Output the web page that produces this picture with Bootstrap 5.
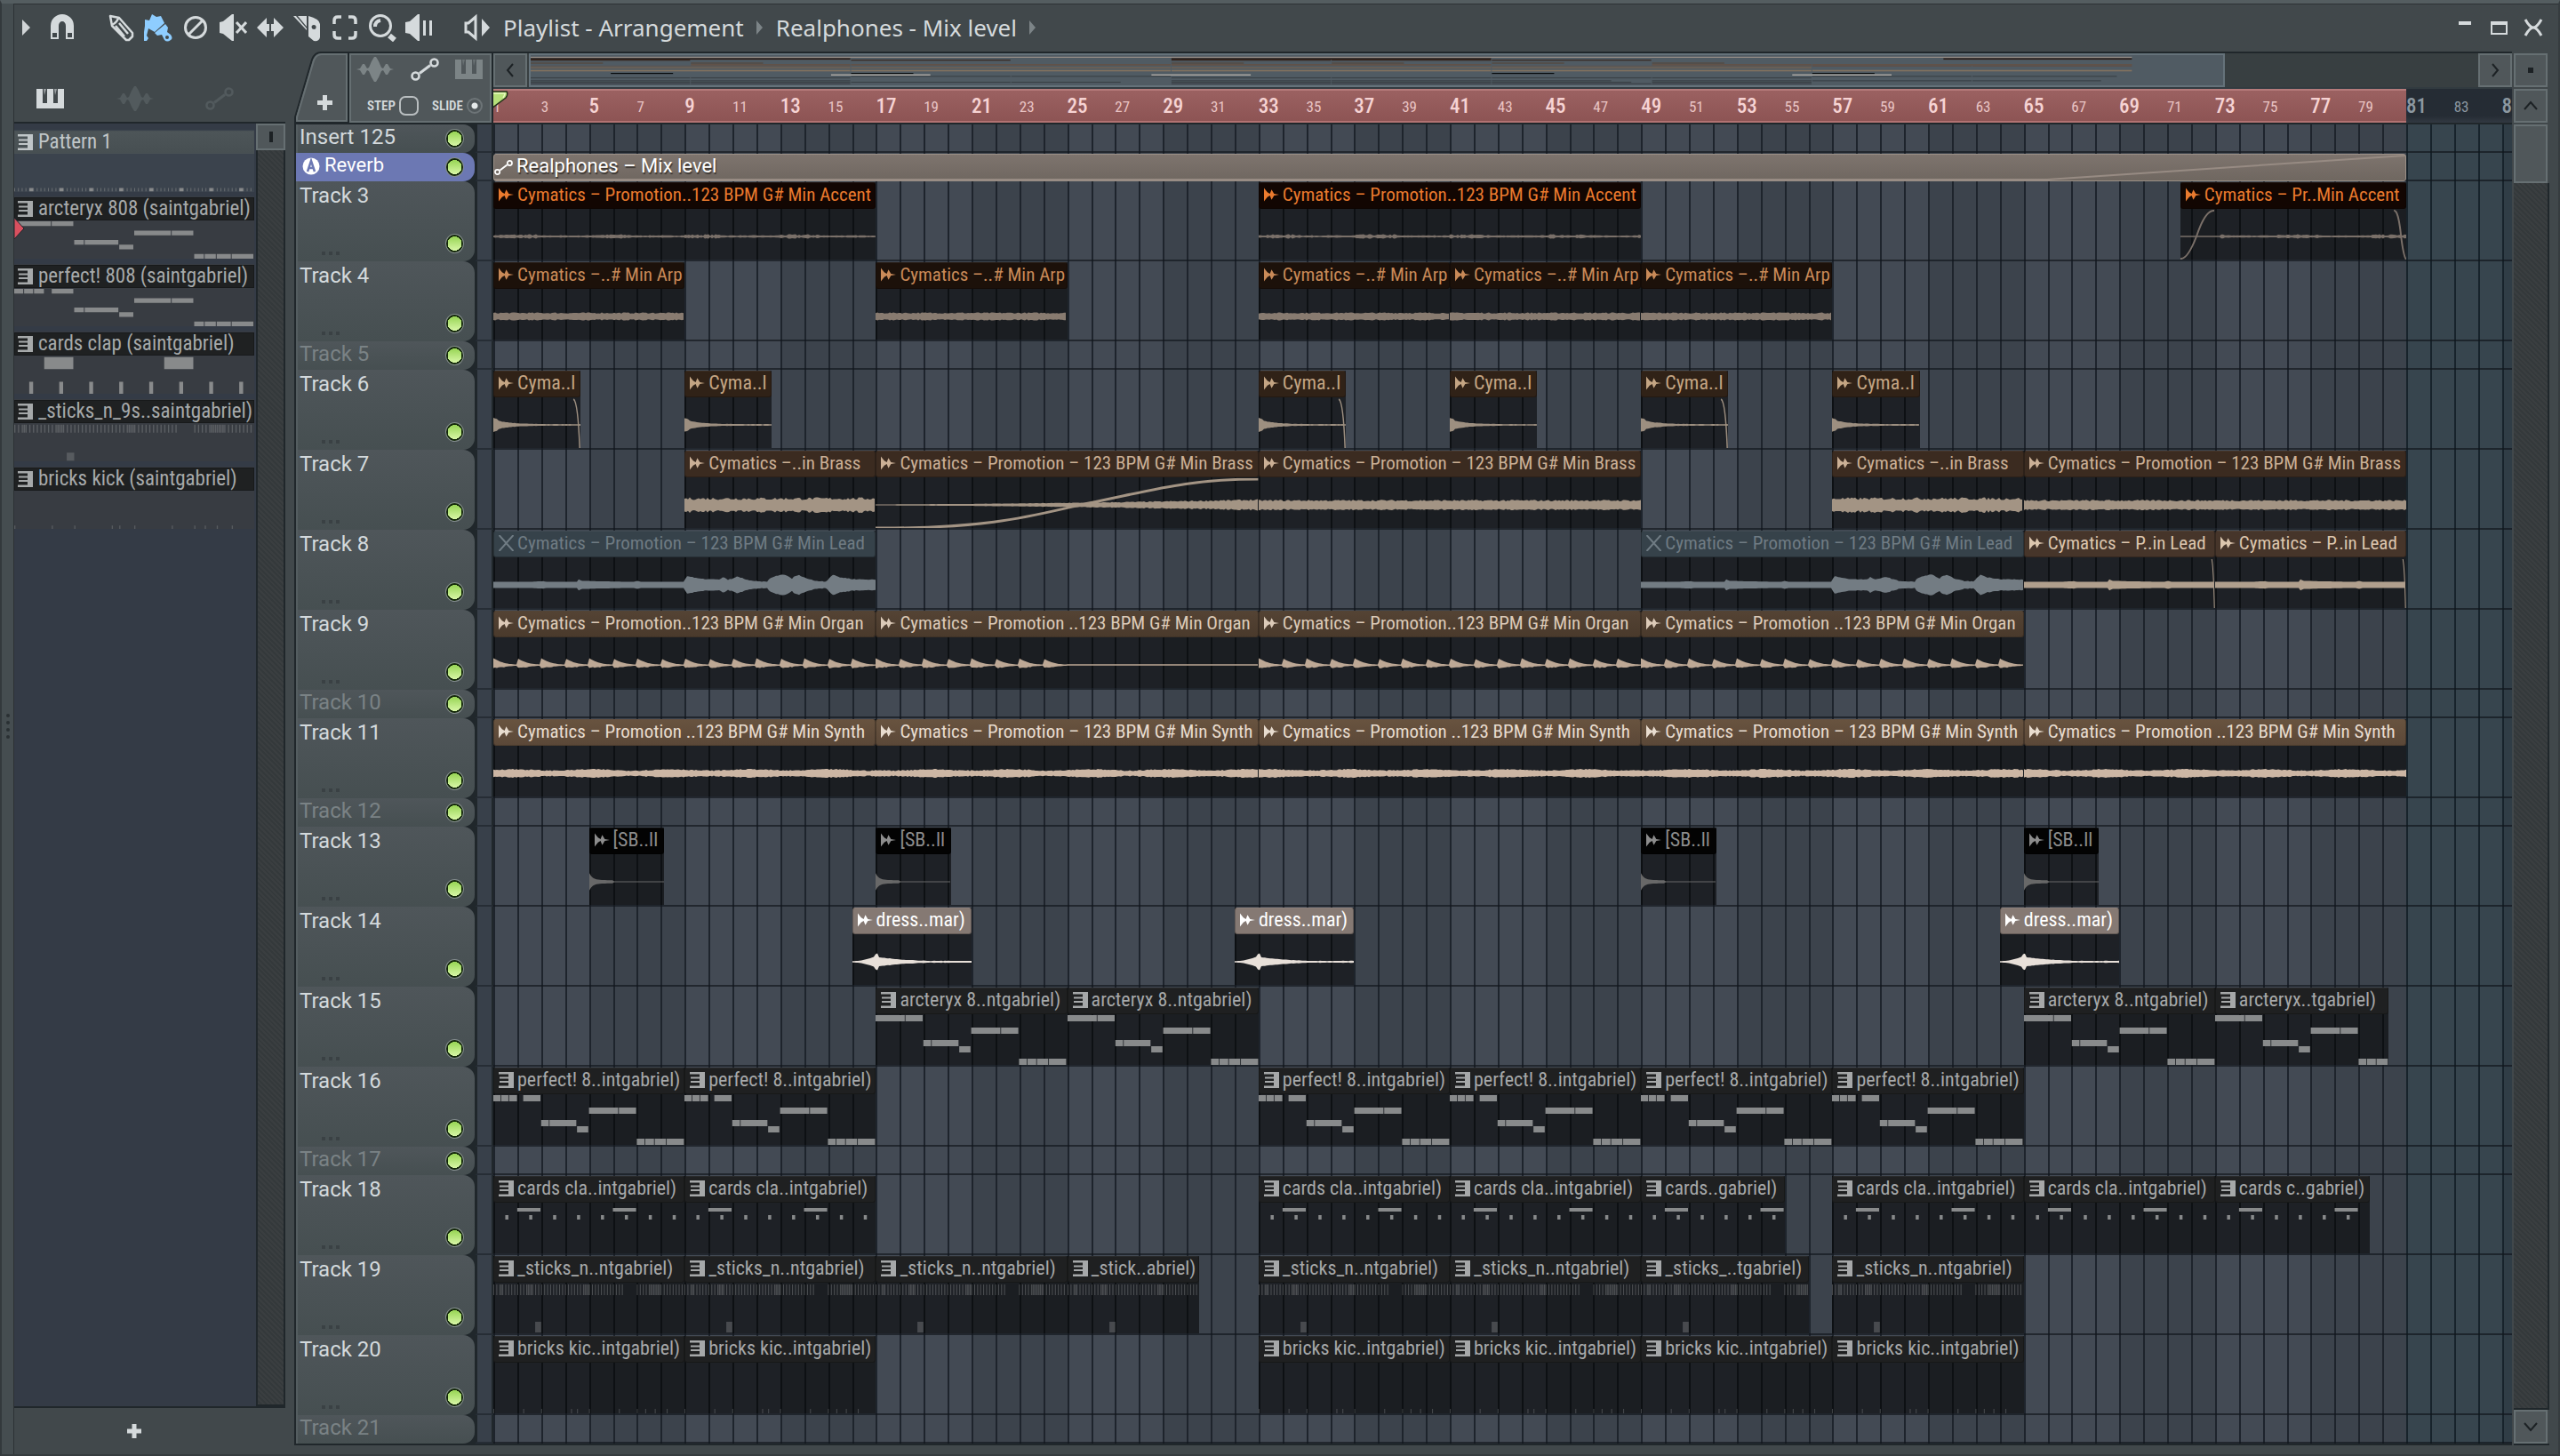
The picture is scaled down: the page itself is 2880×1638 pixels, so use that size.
<!DOCTYPE html>
<html lang="en">
<head>
<meta charset="utf-8">
<meta name="viewport" content="width=device-width, initial-scale=1">
<title>Playlist - Arrangement</title>
<link rel="stylesheet" href="https://cdn.jsdelivr.net/npm/bootstrap@5.3.0/dist/css/bootstrap.min.css">
<style>
:root{--edge:#20272b;--chrome:#41484b;--face:#50575a;--face-line:#666f72;--ink:#d5dadc}
body{background:var(--chrome);color:var(--ink);font-family:"Roboto Condensed",Roboto,sans-serif;font-size:21px;overflow:hidden}
button{background:none;border:0;padding:0;color:inherit}
svg{display:block}
.window-frame{border-left:2px solid #33393c;border-top:4px solid #545d60;border-right:2px solid #363c3f;border-bottom:2px solid #363c3f}
.gutter{width:14px;border-right:1px solid #2c3235;background:#454d50}
.titlebar{height:54px;border-top:1px solid #2c3235;font-family:"Noto Sans",sans-serif;font-size:26px;line-height:54px;padding-bottom:2px}
.tool{width:42px}
.tool svg{margin:auto}
.tool-start{width:26px;margin-right:7px}
.crumb-sep{width:7px;margin:0 15px 0 14px}
.sidebar{width:305px;margin-right:10px}
.source-tabs{height:79px;padding:26px 42px 0 25px}
.patterns{border-top:2px solid var(--edge);border-bottom:2px solid var(--edge);background:#343b46}
.pattern-list{width:272px;padding-top:7px}
.pattern-item{width:270px;height:70px;margin-bottom:6px;display:block;text-align:left;background:#383c42;color:#a6a9aa;font-size:23px}
.pattern-item:first-child{margin-bottom:5px;background:#3b434d;color:#c0c6c8}
.pattern-name{height:26px;line-height:22px;background:#1f2122;padding-left:3px;border:1px solid #17191a;white-space:nowrap}
.pattern-item:first-child .pattern-name{background:linear-gradient(#4d5558,#474f52);border-color:#495154}
.pattern-name svg{margin-right:6px}
.pattern-notes{height:42px;width:100%;margin-top:1px}
.rail{background:repeating-linear-gradient(45deg,#3a3e40 0 2px,#34393b 2px 4px);border:2px solid var(--edge);border-top:0}
.face{background:var(--face);border:2px solid var(--face-line);display:flex;align-items:center;justify-content:center}
.add-pattern{height:52px}
.add-tab{width:60px;height:80px}
.clip-tabs{width:160px;border:2px solid var(--face-line);background:var(--face);box-shadow:0 0 0 2px var(--edge);height:78px;margin:2px 2px 0 2px;padding:2px 8px 0 6px}
.snap-row{font:600 15px/22px "Roboto Condensed",sans-serif;padding-top:16px}
.snap-row input[type=checkbox]{appearance:none;width:22px;height:22px;border:2px solid #b9bec0;border-radius:7px;margin:0 0 0 4px}
.snap-row input[type=radio]{appearance:none;width:18px;height:18px;border:2px solid #6d7477;border-radius:50%;margin:0;background:radial-gradient(circle,#e5e9ea 0 3px,transparent 4px)}
.scroll-top{height:42px;border-top:2px solid var(--edge);border-bottom:2px solid #323b40;background:#383f41}
.scroll-top .face{width:38px}
.overview{flex:0 0 84%;border:2px solid #65727a;background:#505b63;margin-left:2px}
.ruler{height:38px;background:linear-gradient(#252c34 0 80%,#323942)}
.ruler-loop{background:linear-gradient(#9b6161,#8d5454);border-top:2px solid #b57a7a;border-bottom:2px solid #b27272}
.ruler-label{font-size:17px;color:#e9c4c4;line-height:40px;flex:none;white-space:nowrap;display:flex;align-items:baseline}
.ruler-label.strong{font-size:23px;font-weight:500;color:#f6d3d3}
.ruler-label.beyond{color:#8c98a1}
.track-head{width:201px;border-radius:0 13px 13px 0;background:linear-gradient(#4f565a,#464f51);border-left:2px solid #545d60;padding:0 12px 0 2px;font-family:Roboto,sans-serif;font-size:24px;color:#d3d9dc}
.track-row{height:90px}
.track-row.short{height:32px}
.track-name{line-height:32px}
.short .track-name{line-height:28px}
.track-head.unused{color:#7a8285}
.track-head.active{background:#6c78b3;border-color:#6c78b3;color:#fff;font-size:22px}
.track-head.active svg{margin:5px 5px 0 3px}
.led{appearance:none;width:21px;height:22px;border-radius:50%;border:1px solid #858d8f;background:radial-gradient(circle at 50% 50%,transparent 0 8px,#14280a 8px),linear-gradient(#8fd04a,#e0fbb0);margin:5px 0 0}
.track-row:not(.short) .led{margin-top:59px}
.row-dots{position:absolute;left:27px;bottom:7px}
.head-gap{width:21px;background:#38404a;border-left:3px solid var(--edge);border-right:2px solid var(--edge);border-bottom:2px solid #262d35}
.heads{background:var(--edge);border-left:2px solid var(--edge)}
.lanes{min-width:0}
.lane{border-bottom:2px solid rgba(16,21,28,.66);padding-top:1px}
.grid-back{position:absolute;inset:0;width:100%;height:100%}
.clip-box{flex:none;background:rgba(0,0,0,.55);min-width:0}
.clip-name{height:30px;line-height:24px;border-radius:3px;white-space:nowrap;overflow:hidden;padding:0 0 3px 5px;font-size:21px;border:1px solid rgba(0,0,0,.25);border-top-color:rgba(255,255,255,.05)}
.clip-name svg{margin-right:4px;flex:none}
.clip-wave{height:56px;width:100%;margin-top:1px}
.auto-clip{flex:none;height:31px;border:1px solid #9a8f86;border-radius:3px;background:linear-gradient(#7e746e,#6f6760);color:#fff;font:22px/25px Roboto,sans-serif;text-shadow:1px 2px 1px #3b3632}
.play-marker{position:absolute;left:0;top:2px}
.vscroll{width:40px;margin:0 10px 0 2px}
.vscroll .face{width:38px;height:38px}
.vthumb.face{height:66px}
.top-corner{margin-top:2px}
.win-btn{width:38px}
.win-btns{padding-right:8px}
.frame-bottom{height:12px;border-top:2px solid var(--edge)}
.k-accent{background:#120602;color:#ea7a2e}.k-arp{background:#1c110a;color:#c98a58}.k-fx{background:#302217;color:#c4a583}
.k-brass{background:#3b2b20;color:#cbb096}.k-lead{background:#46352a;color:#dcc6ae}.k-muted{background:#36424a;color:#6f7b83}
.k-organ{background:linear-gradient(#544334,#4a3a2c);color:#dccab8}.k-synth{background:linear-gradient(#68533f,#5b4838);color:#e8dccf}
.k-sb{background:#030303;color:#8c8c8c}.k-dress{background:#857973;color:#fff}.k-midi{background:#1f2021;color:#a6a8a9}
.k-midi,.k-sb,.k-dress,.k-fx{font-size:22px}
</style>
<script src="https://cdn.jsdelivr.net/npm/bootstrap@5.3.0/dist/js/bootstrap.bundle.min.js"></script>
</head>
<body>
<svg width="0" height="0" class="position-absolute" aria-hidden="true">
  <symbol id="i-wave" viewBox="0 0 42 28"><path fill="currentColor" d="M0 14l4-1 3-5h2l3 5 2-1 3-7 3-5h2l3 5 3 7 2 1 3-5h2l3 5 4 1-4 1-3 5h-2l-3-5-2 1-3 7-3 5h-2l-3-5-3-7-2-1-3 5h-2l-3-5z"/></symbol>
  <symbol id="i-auto" viewBox="0 0 32 26"><g fill="none" stroke="currentColor" stroke-width="2.6"><circle cx="5.500" cy="20.500" r="4"/><circle cx="26.500" cy="5.500" r="4"/><path d="M10 17.500L22 8.500" stroke-width="3"/></g></symbol>
  <symbol id="i-piano" viewBox="0 0 31 22"><path fill="currentColor" d="M0 0h7v16h5V0h7v16h5V0h7v22H0z"/><path fill="currentColor" d="M8 0h3l-2 7zM20 0h3l-2 7z" opacity=".6"/></symbol>
  <symbol id="i-midi" viewBox="0 0 17 18"><path fill="currentColor" d="M0 0h17v18H0v-2.500h11v-3.500H1v-2h10V7.500H1v-2h10V2.500H0z"/></symbol>
  <symbol id="i-audio" viewBox="0 0 18 16"><path fill="currentColor" d="M0 0l4 5 3 2 2-5 3 5 6 1-6 1-3 5-2-5-3 2-4 5z"/></symbol>
  <symbol id="i-mutex" viewBox="0 0 16 18"><path fill="none" stroke="currentColor" stroke-width="2" d="M0 0q8 9 16 18M16 0Q8 9 0 18"/></symbol>
  <symbol id="i-plus" viewBox="0 0 16 16"><path fill="currentColor" d="M5.500 0h5v5.500H16v5h-5.500V16h-5v-5.500H0v-5h5.500z"/></symbol>
</svg>

<div class="window-frame d-flex">
  <div class="gutter d-flex flex-column justify-content-center align-items-center">
    <svg width="6" height="36" fill="#2a3033"><circle cx="3" cy="3" r="2"/><circle cx="3" cy="11" r="2"/><circle cx="3" cy="19" r="2"/><circle cx="3" cy="27" r="2"/></svg>
  </div>
  <div class="flex-grow-1 d-flex flex-column" style="min-width:0">
    <header class="titlebar d-flex align-items-center">
      <button class="tool-start" aria-label="Menu"><svg width="26" height="20"><path fill="#d0d4d6" d="M9 1l9 9-9 9z"/></svg></button>
      <button class="tool" aria-label="Snap"><svg width="32" height="32"><path fill="#d5dadc" fill-rule="evenodd" d="M3 29V14a13 13 0 0 1 26 0v15h-9V14a4 5 0 0 0-8 0v15zM5 22v5h5v-5zM22 22v5h5v-5z"/></svg></button>
      <button class="tool ms-4" aria-label="Draw"><svg width="32" height="32"><path fill="none" stroke="#d5dadc" stroke-width="2.500" stroke-linejoin="round" d="M4 3l10 2 15 17v4l-4 4h-3L6 14zM13 5q-1 5-7 8M14 11l10 12M10 14l10 12"/></svg></button>
      <button class="tool" aria-label="Paint"><svg width="32" height="32"><g fill="#8ecdff"><path d="M1 7l5 1 3-7 5 3 5-1 4 8-11 10-7-4-2 8 2 3-2 3h-3V21l1-7z"/><path d="M24 12l3 4-1 5 4 3q3 4 0 6-4 3-7 0l-3-6-5 1-3-3z"/></g><circle cx="26" cy="27" r="2" fill="#41484b"/></svg></button>
      <button class="tool" aria-label="Delete"><svg width="32" height="32" fill="none" stroke="#d5dadc" stroke-width="3"><circle cx="16" cy="16" r="11.500"/><path d="M8 24L24 8"/></svg></button>
      <button class="tool" aria-label="Mute"><svg width="32" height="32"><path fill="#d5dadc" d="M1 10l4-1L15 1h2v30h-2L5 23l-4-1z"/><path stroke="#d5dadc" stroke-width="3" d="M20 10l11 12M31 10L20 22"/></svg></button>
      <button class="tool" aria-label="Slip"><svg width="32" height="32" fill="#d5dadc"><path d="M1 16L12 5v7h3v8h-3v7zM31 16L20 5v7h-3v8h3v7z"/></svg></button>
      <button class="tool" aria-label="Slice"><svg width="32" height="32" fill="#d5dadc"><path d="M0 3h3l12 14v2zM5 3h10v12z"/><path fill-rule="evenodd" d="M17 3q12 3 13 9v15q-1 5-7 4l-6-5zM23 13a2 2 0 1 0 .1 5 2 2 0 0 0 0-5z"/></svg></button>
      <button class="tool" aria-label="Select"><svg width="32" height="32" fill="none" stroke="#d5dadc" stroke-width="3.500"><path d="M4 12V8q0-4 4-4h4M20 4h4q4 0 4 4v4M28 20v4q0 4-4 4h-4M12 28H8q-4 0-4-4v-4"/></svg></button>
      <button class="tool" aria-label="Zoom"><svg width="32" height="32" fill="none" stroke="#d5dadc" stroke-width="3"><circle cx="14" cy="14" r="11.500"/><path d="M24 25l6 5" stroke-width="6"/><path d="M8 15q0-6 6-7" stroke-width="4"/></svg></button>
      <button class="tool" aria-label="Playback"><svg width="32" height="32" fill="#d5dadc"><path d="M0 10l5-1L14 1h2v30h-2L5 23l-5-1zM20 8h3v17h-3zM27 8h3v17h-3z"/></svg></button>
      <button class="tool" style="margin-left:23px" aria-label="Playlist options"><svg width="32" height="32" fill="#d5dadc"><path fill="none" stroke="#d5dadc" stroke-width="3" d="M3 11h3l8-7v24l-8-7H3z"/><path d="M21 6l9 10-9 10z"/></svg></button>
      <a href="#" class="text-decoration-none text-reset ms-2">Playlist - Arrangement</a>
      <svg class="crumb-sep" height="16"><path fill="#7c8487" d="M0 0l7 8-7 8z"/></svg>
      <a href="#" class="text-decoration-none text-reset">Realphones - Mix level</a>
      <svg class="crumb-sep" height="16"><path fill="#7c8487" d="M0 0l7 8-7 8z"/></svg>
      <div class="ms-auto d-flex win-btns">
        <button class="win-btn" aria-label="Minimize"><svg width="38" height="20"><path fill="#d5dadc" d="M10 3h14v4H10z"/></svg></button>
        <button class="win-btn" aria-label="Maximize"><svg width="38" height="20"><path fill="#d5dadc" fill-rule="evenodd" d="M8 3h19v15H8zM10 7v9h15V7z"/></svg></button>
        <button class="win-btn" aria-label="Close"><svg width="38" height="20"><path fill="none" stroke="#d5dadc" stroke-width="3" d="M9 1q5 9 9 9t9-9M9 19q5-9 9-9t9 9"/></svg></button>
      </div>
    </header>

    <div class="d-flex flex-grow-1">
      <aside class="sidebar d-flex flex-column flex-shrink-0">
        <div class="source-tabs d-flex justify-content-between align-items-center">
          <button aria-label="Patterns"><svg width="31" height="22"><use href="#i-piano"/></svg></button>
          <button aria-label="Audio" style="color:#525a5d"><svg width="42" height="28"><use href="#i-wave"/></svg></button>
          <button aria-label="Automation" style="color:#525a5d" class="me-3"><svg width="32" height="26"><use href="#i-auto"/></svg></button>
        </div>
        <div class="patterns d-flex flex-grow-1">
          <div class="pattern-list position-relative" id="patterns"></div>
          <div class="d-flex flex-column flex-grow-1">
            <button class="face" style="height:30px" aria-label="Scroll handle"><svg width="4" height="12"><path fill="#1c2124" d="M0 0h4v12H0z"/></svg></button>
            <div class="rail flex-grow-1"></div>
          </div>
        </div>
        <button class="add-pattern" aria-label="Add pattern"><svg width="16" height="16" style="margin-left:127px"><use href="#i-plus"/></svg></button>
      </aside>

      <main class="flex-grow-1 d-flex" style="min-width:0">
        <div class="flex-grow-1 d-flex flex-column" style="min-width:0">
          <div class="d-flex">
            <div class="d-flex flex-shrink-0">
              <button class="add-tab position-relative" aria-label="Add track"><svg width="62" height="80"><path fill="#50575a" stroke="#20272b" stroke-width="2" d="M1 80V74L20 9q3-8 10-8h31v79z"/><path fill="none" stroke="#666f72" stroke-width="2" d="M3 78V74L22 10q3-7 9-7h28v75z"/><path fill="#d5dadc" d="M32 49h5v6h6v5h-6v6h-5v-6h-6v-5h6z"/></svg></button>
              <div class="clip-tabs">
                <div class="d-flex justify-content-between align-items-center">
                  <button aria-label="Audio clips" style="color:#7c8486"><svg width="42" height="28"><use href="#i-wave"/></svg></button>
                  <button aria-label="Automation clips"><svg width="32" height="26"><use href="#i-auto"/></svg></button>
                  <button aria-label="Pattern clips" style="color:#7c8486"><svg width="31" height="22"><use href="#i-piano"/></svg></button>
                </div>
                <div class="snap-row d-flex justify-content-between align-items-center ps-2">
                  <label class="d-flex align-items-center ms-1">STEP<input type="checkbox"></label>
                  <label class="d-flex align-items-center gap-1">SLIDE<input type="radio" checked></label>
                </div>
              </div>
            </div>
            <div class="flex-grow-1" style="min-width:0">
              <div class="scroll-top d-flex">
                <button class="face" aria-label="Scroll left"><svg width="12" height="16"><path fill="none" stroke="#1c2124" stroke-width="2" d="M9 1L3 8l6 7"/></svg></button>
                <svg class="overview" id="overview" viewBox="0 0 845 360" preserveAspectRatio="none" height="38"></svg>
                <button class="face ms-auto" aria-label="Scroll right"><svg width="12" height="16"><path fill="none" stroke="#1c2124" stroke-width="2" d="M3 1l6 7-6 7"/></svg></button>
              </div>
              <div class="ruler position-relative overflow-hidden">
                <div class="ruler-loop h-100" id="loop"></div>
                <div class="d-flex position-absolute top-0 start-0 w-100" id="ruler"></div>
                <svg class="play-marker" width="18" height="22"><path fill="#b6e07a" stroke="#25331a" stroke-width="1.500" d="M-2 1h17q2 3-1 7L-2 20z"/><path fill="none" stroke="#e9fbc0" stroke-width="1.500" d="M0 3h13q0 2-2 5"/></svg>
              </div>
            </div>
          </div>
          <div class="d-flex" style="border-top:2px solid #20272b">
            <div class="heads flex-shrink-0" id="heads"></div>
            <div class="lanes flex-grow-1 position-relative overflow-hidden" id="lanes">
              <svg class="grid-back" id="grid" shape-rendering="crispEdges"></svg>
            </div>
          </div>
          <div class="frame-bottom"></div>
        </div>
        <div class="vscroll d-flex flex-column flex-shrink-0">
          <button class="face top-corner" aria-label="View options"><svg width="6" height="8"><path fill="#1c2124" d="M0 1h6v6H0z"/></svg></button>
          <button class="face top-corner" aria-label="Scroll up"><svg width="16" height="12"><path fill="none" stroke="#1c2124" stroke-width="2" d="M1 10l7-8 7 8"/></svg></button>
          <button class="face vthumb top-corner" aria-label="Scroll handle"></button>
          <div class="rail flex-grow-1 border-start-0"></div>
          <button class="face" aria-label="Scroll down"><svg width="16" height="12"><path fill="none" stroke="#1c2124" stroke-width="2" d="M1 2l7 8 7-8"/></svg></button>
          <div class="frame-bottom"></div>
        </div>
      </main>
    </div>
  </div>
</div>

<script>
const BARS = 84.42, pct = b => (b / BARS * 100).toFixed(4) + '%';
let seed = 7; const rnd = () => (seed = (seed * 16807) % 2147483647) / 2147483647;
const C = (kind, list, wave) => list.map(([at, len, name, opt]) => ({kind, at, len, name, wave, opt}));

const A = 'Cymatics – Promotion';
const tracks = [
  {name:'Insert 125', short:1, clips:[]},
  {name:'Reverb', short:1, active:1, clips:[{kind:'auto', at:0, len:80, name:'Realphones – Mix level'}]},
  {name:'Track 3', clips:C('accent',[[0,16,A+'..123 BPM G# Min Accent'],[32,16,A+'..123 BPM G# Min Accent'],[70.55,9.45,'Cymatics – Pr..Min Accent','inout']],'thin')},
  {name:'Track 4', clips:C('arp',[0,16,32,40,48].map(s=>[s,8,'Cymatics –..# Min Arp']),'arp')},
  {name:'Track 5', short:1, unused:1, clips:[]},
  {name:'Track 6', clips:C('fx',[[0,3.65,'Cyma..l','out'],[8,3.65,'Cyma..l'],[32,3.65,'Cyma..l','out'],[40,3.65,'Cyma..l'],[48,3.65,'Cyma..l','out'],[56,3.65,'Cyma..l']],'decay')},
  {name:'Track 7', clips:C('brass',[[8,8,'Cymatics –..in Brass','loud'],[16,16,A+' – 123 BPM G# Min Brass','rise'],[32,16,A+' – 123 BPM G# Min Brass'],[56,8,'Cymatics –..in Brass','loud'],[64,16,A+' – 123 BPM G# Min Brass']],'brass')},
  {name:'Track 8', clips:[...C('muted',[[0,16,A+' – 123 BPM G# Min Lead'],[48,16,A+' – 123 BPM G# Min Lead']],'lead'),...C('lead',[[64,8,'Cymatics – P..in Lead','out'],[72,8,'Cymatics – P..in Lead','out']],'lead')]},
  {name:'Track 9', clips:C('organ',[[0,16,A+'..123 BPM G# Min Organ'],[16,16,A+' ..123 BPM G# Min Organ','half'],[32,16,A+'..123 BPM G# Min Organ'],[48,16,A+' ..123 BPM G# Min Organ']],'saw')},
  {name:'Track 10', short:1, unused:1, clips:[]},
  {name:'Track 11', clips:C('synth',[[0,16,A+' ..123 BPM G# Min Synth'],[16,16,A+' – 123 BPM G# Min Synth'],[32,16,A+' ..123 BPM G# Min Synth'],[48,16,A+' – 123 BPM G# Min Synth'],[64,16,A+' ..123 BPM G# Min Synth']],'synth')},
  {name:'Track 12', short:1, unused:1, clips:[]},
  {name:'Track 13', clips:C('sb',[4,16,48,64].map(s=>[s,3.15,'[SB..ll']),'hit')},
  {name:'Track 14', clips:C('dress',[15,31,63].map(s=>[s,5,'dress..mar)']),'swell')},
  {name:'Track 15', clips:C('midi',[[16,8,'arcteryx 8..ntgabriel)'],[24,8,'arcteryx 8..ntgabriel)'],[64,8,'arcteryx 8..ntgabriel)'],[72,7.25,'arcteryx..tgabriel)']],'arc')},
  {name:'Track 16', clips:C('midi',[0,8,32,40,48,56].map(s=>[s,8,'perfect! 8..intgabriel)']),'perf')},
  {name:'Track 17', short:1, unused:1, clips:[]},
  {name:'Track 18', clips:C('midi',[[0,8],[8,8],[32,8],[40,8],[48,6,'cards..gabriel)'],[56,8],[64,8],[72,6.46,'cards c..gabriel)']].map(c=>[c[0],c[1],c[2]||'cards cla..intgabriel)']),'clap')},
  {name:'Track 19', clips:C('midi',[[0,8],[8,8],[16,8],[24,5.5,'_stick..abriel)'],[32,8],[40,8],[48,7,'_sticks_..tgabriel)'],[56,8]].map(c=>[c[0],c[1],c[2]||'_sticks_n..ntgabriel)']),'sticks')},
  {name:'Track 20', clips:C('midi',[0,8,32,40,48,56].map(s=>[s,8,'bricks kic..intgabriel)']),'kick')},
  {name:'Track 21', short:1, unused:1, clips:[]}
];

/* note blocks on an 8 bar by 56 unit sheet: [bar, length, y, height, opacity] */
const melody = [[2,.35,28,7],[2.35,1.15,28,7],[3.5,.5,35,7],[4,1.25,14,7],[5.25,.75,14,7],[6,.35,49,7],[6.35,.4,49,7],[6.75,.5,49,7],[7.25,.75,49,7]];
function notes(type, list) {
  const n = [];
  if (type === 'arc') n.push([0,1.25,0,7],[1.25,.75,0,7],...melody);
  if (type === 'perf') n.push([0,.33,0,7],[.33,.33,0,7],[.66,.36,0,7],[1.25,.75,0,7],...melody);
  if (type === 'clap') { const b = list ? [1,18] : [5,4], t = list ? [38,18] : [13,5];
    [1,5].forEach(x => n.push([x,1,b[0],b[1]])); for (let i=0;i<8;i++) n.push([i+.5,.13,t[0],t[1]]); }
  if (type === 'sticks') { for (let i=0;i<64;i++) { const x=i*.125; if (x>5.4&&x<6) continue; n.push([x,.04,1,12,.45]); if ([2,11,12,30,31,52,53,54,55].includes(i)) n.push([x+.06,.05,1,12,.45]); }
    n.push([1.75,.25,43,12,.4]); }
  if (type === 'kick') [0,1.25,2,3.25,3.5,4,5.25,6,6.35,6.75,7.25].forEach(x => n.push([x,.04,51,5,.4]));
  if (type === 'first') for (let i=0;i<64;i++) n.push(i%8===4 ? [i*.125,.13,50,5,1] : [i*.125,.03,50,5,.6]);
  return n;
}
const noteSvg = (type, len, cls, list) => `<svg class="${cls}" viewBox="0 0 ${len} 56" preserveAspectRatio="none" fill="#888a8b">` +
  notes(type, list).filter(n => n[0] < len).map(([x,w,y,h,o=1]) => `<rect x="${x}" y="${y}" width="${w>.3 ? w-.03 : w}" height="${h}" opacity="${o}"/>`).join('') + '</svg>';

const ink = {accent:'#7a7069', arp:'#887b70', fx:'#9d8f80', brass:'#a39484', muted:'#737c83', lead:'#b09f8d', organ:'#bda895', synth:'#ccb6a4', sb:'#686868', dress:'#e8e0d9'};
const leadShape = [[0,3.4],[1.5,3.4],[2.1,4.2],[2.2,3.4],[3.5,3.4],[3.55,6.5],[3.7,4.6],[4.5,4],[5.9,3.4],[6,4.6],[6.2,3.4],[7.95,3.4],[8.1,9.5],[8.6,6.5],[9.45,5.5],[9.6,8.5],[9.8,5.5],[10,6.5],[10.2,9],[10.6,5.5],[10.8,4],[11.45,3],[11.5,6],[11.8,9.5],[12.15,11.5],[12.5,6.5],[12.6,9.5],[12.8,10.5],[13.2,6],[13.5,4],[13.95,3.4],[14.02,7],[14.2,11],[14.5,8],[15.1,6],[16,5.5]];
function leadAt(b) { let i = 1; while (i < leadShape.length-1 && leadShape[i][0] < b) i++;
  const [x0,y0] = leadShape[i-1], [x1,y1] = leadShape[i]; return y0 + (y1-y0) * Math.min(1, (b-x0)/(x1-x0)); }
/* half heights above and below the centre line at bar b */
function amp(c, b) {
  const r = rnd(), f = b % 1;
  switch (c.wave) {
    case 'thin': { if (c.opt && b < 1.7) return [.7,.7]; const a = .8 + r * (Math.sin(b*1.6) > .2 ? 1.7 : .6); return [a,a]; }
    case 'arp': return [3.2+r*1.4, 3.2+r*1.4];
    case 'decay': { const a = .6 + 5.5*Math.exp(-b*1.7) + (b<.15?1.5:0) + r*.4; return [a,a]; }
    case 'brass': { if (c.opt==='loud') return [5.5+r*3, 6+r*3]; if (c.opt==='rise') { const q = .6+(4+r*2)*Math.pow(b/16,1.6); return [q,q]; } return [4+r*1.8,4.5+r*1.5]; }
    case 'lead': { const a = leadAt(b) + (b>8 ? r*.8 : 0); return [a,a]; }
    case 'saw': { if (c.opt && b > 8) return [.8,.8]; return [.6+7*Math.pow(1-f,2.4), .8+2.2*(1-f)+(f<.5?r:0)]; }
    case 'synth': { const a = 3.2 + r*1.2 + .7*Math.sin(b*1.9+c.at); return [a,a]; }
    case 'hit': { const a = .6 + 8*Math.exp(-b*7) + (b<1?1.2:0); return [a,a]; }
    case 'swell': { const a = b < 1 ? .8+6*b*b+(b>.92?2:0) : .8+4.5*Math.max(0,1-(b-1)/2.2)*Math.exp(-(b-1)*.4)+(b<1.05?4:0)+r*.4; return [a,a]; }
  }
}
function waveSvg(c) {
  const k = 26.9, w = c.len * k, mid = 30, top = [], bot = [];
  for (let x = 0; x <= w; x += 2) { const [u,d] = amp(c, x/k); top.push(x + ' ' + (mid-u).toFixed(1)); bot.unshift(x + ' ' + (mid+d).toFixed(1)); }
  const col = ink[c.kind]; let extra = '';
  const line = (d, s=2) => `<path d="${d}" fill="none" stroke="${col}" stroke-width="${s}"/>`;
  if (c.opt === 'inout') extra = line(`M0 55Q8 56 18 30Q28 0 38 1M${w-14} 1Q${w-9} 0 ${w-6} 30Q${w-3} 54 ${w} 56`);
  if (c.opt === 'out') extra = c.wave === 'lead' ? line(`M${w-4} 1Q${w-2} 10 ${w-1} 56`,1) : line(`M${w-8} 1Q${w-3} 4 ${w-1} 56`,1.5);
  if (c.opt === 'rise') extra = line(`M0 56C140 57 190 38 240 28C310 14 350 1 ${w} 1`,3);
  return `<svg class="clip-wave" viewBox="0 0 ${w} 56" preserveAspectRatio="none"><path fill="${col}" d="M${top.join('L')}L${bot.join('L')}Z"/>${extra}</svg>`;
}
const icon = k => k==='midi' ? '<svg width="17" height="18"><use href="#i-midi"/></svg>' : k==='muted' ? '<svg width="17" height="18"><use href="#i-mutex"/></svg>' : '<svg width="17" height="16"><use href="#i-audio"/></svg>';

const heads = document.getElementById('heads'), lanes = document.getElementById('lanes');
tracks.forEach(t => {
  const s = t.short ? ' short' : '';
  heads.insertAdjacentHTML('beforeend', `<div class="track-row d-flex${s}"><div class="track-head position-relative d-flex ${t.unused?'unused':''} ${t.active?'active':''}">` +
    (t.active ? '<svg width="20" height="20"><circle cx="10" cy="10" r="9.500" fill="#fff"/><path d="M6 16L10 4l4 12M7 12h6" fill="none" stroke="#6c78b3" stroke-width="2.500"/></svg>' : '') +
    `<span class="track-name flex-grow-1">${t.name}</span>` +
    (t.short ? '' : '<svg class="row-dots" width="22" height="4" fill="#3a4144"><path d="M0 0h4v4H0zM8 0h4v4H8zM16 0h4v4h-4z"/></svg>') +
    (t.name === 'Track 21' ? '' : `<input type="checkbox" class="led flex-shrink-0" checked aria-label="${t.name} on">`) +
    '</div><div class="head-gap"></div></div>');
  let pos = 0, html = '';
  t.clips.forEach(c => {
    const st = `margin-left:${pct(c.at-pos)};width:${pct(c.len)}`; pos = c.at + c.len;
    if (c.kind === 'auto') {
      html += `<div class="auto-clip d-flex position-relative" style="${st}"><svg width="21" height="19" style="margin:5px 4px 0 0"><use href="#i-auto"/></svg>${c.name}<svg class="grid-back" viewBox="0 0 80 30" preserveAspectRatio="none"><path d="M0 29H65L80 1" fill="none" stroke="#978b83" stroke-width="2" vector-effect="non-scaling-stroke"/></svg></div>`;
    } else {
      html += `<div class="clip-box" style="${st}"><div class="clip-name d-flex align-items-center k-${c.kind}">${icon(c.kind)}<span>${c.name}</span></div>${c.kind==='midi' ? noteSvg(c.wave, c.len, 'clip-wave') : waveSvg(c)}</div>`;
    }
  });
  lanes.insertAdjacentHTML('beforeend', `<div class="lane track-row d-flex position-relative${s}">${html}</div>`);
});

let g = '';
for (let b = 0; b < 85; b += 4) g += `<rect x="${pct(b)}" width="${pct(4)}" height="100%" fill="${b>=80 ? (b%8?'#303d46':'#37454e') : b%8?'#3c434c':'#434a54'}"/>`;
for (let b = 0; b < 85; b++) g += `<rect x="${pct(b)}" width="2" height="100%" fill="${b>=80?'#17232b':'#1e242c'}"/>`;
document.getElementById('grid').innerHTML = g;

document.getElementById('loop').style.width = pct(80);
let r = '';
for (let b = 1; b < 86; b += 2) r += `<span class="ruler-label ${b%4===1&&b>1?'strong':''} ${b>80?'beyond':''}" style="width:${pct(2)}">${b}</span>`;
document.getElementById('ruler').innerHTML = r;

const tone = {auto:'#9a9089', accent:'#2c1c14', arp:'#35241b', fx:'#56463b', brass:'#625247', muted:'#5d5752', lead:'#5d5049', organ:'#6e6154', synth:'#83725f', sb:'#07090b', dress:'#c8c0b8', midi:'#3a4146'};
document.getElementById('overview').innerHTML = tracks.map((t,i) => t.clips.map(c => `<rect x="${c.at*10}" y="${i*17.5+2}" width="${c.len*10-.4}" height="${/synth|brass|accent|organ/.test(c.kind)?17:12}" fill="${tone[c.kind]}"/>`).join('')).join('');

const pats = [['Pattern 1','first'],['arcteryx 808 (saintgabriel)','arc'],['perfect! 808 (saintgabriel)','perf'],['cards clap (saintgabriel)','clap'],['_sticks_n_9s..saintgabriel)','sticks'],['bricks kick (saintgabriel)','kick']];
document.getElementById('patterns').innerHTML = pats.map(([n,k]) => `<button class="pattern-item"><div class="pattern-name d-flex align-items-center"><svg width="17" height="18"><use href="#i-midi"/></svg><span>${n}</span></div>${noteSvg(k,8,'pattern-notes',true)}</button>`).join('') +
  '<svg width="14" height="24" class="position-absolute start-0" style="top:106px"><path d="M0 0l11 12L0 24z" fill="#d9505f" stroke="#20262c"/></svg>';
</script>
</body>
</html>
